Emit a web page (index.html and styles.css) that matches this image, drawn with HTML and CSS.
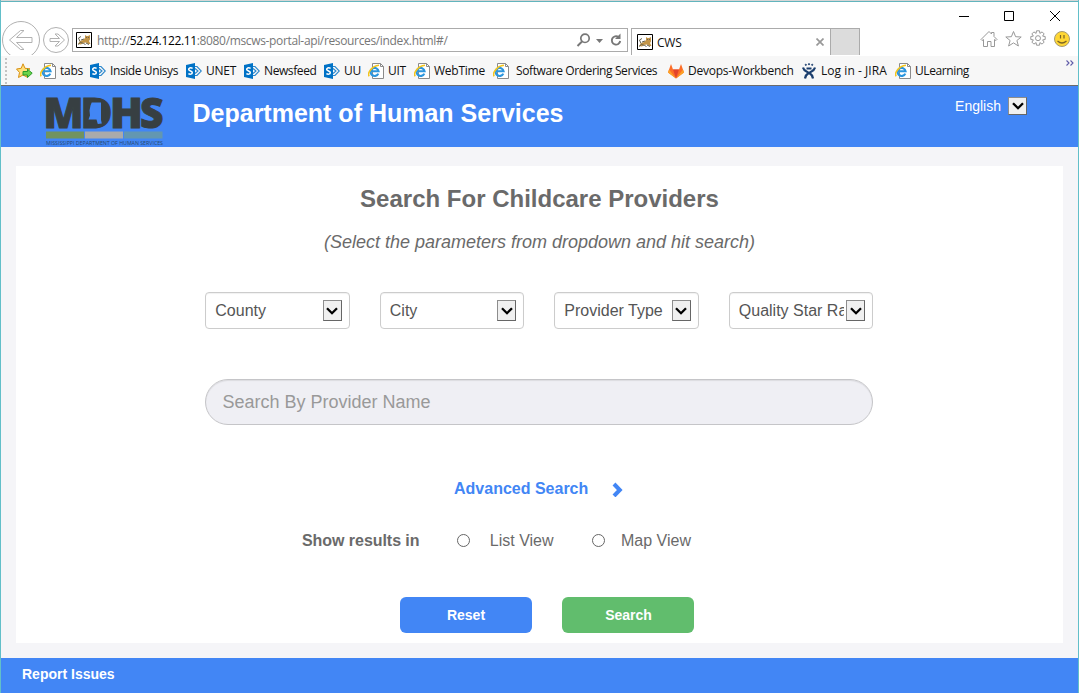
FILE: index.html
```html
<!DOCTYPE html>
<html lang="en">
<head>
<meta charset="utf-8">
<title>CWS</title>
<link rel="stylesheet" href="styles.css">
</head>
<body>
<svg class="defs" width="0" height="0">
  <symbol id="ie" viewBox="0 0 16 16">
    <path d="M4.500.5h8l3 3v12h-11z" fill="#fff" stroke="#8b8b8b"/>
    <path d="M12.5.5v3h3" fill="none" stroke="#8b8b8b"/>
    <path d="M10.300 10.600A4 4 0 1 1 10.600 8.300H3.400" fill="none" stroke="#2c96de" stroke-width="2.100"/>
    <path d="M1.200 13.300C-1 10.500 3.500 3 11 2.300" fill="none" stroke="#f4c51c" stroke-width="1.600"/>
  </symbol>
  <symbol id="sp" viewBox="0 0 16 16">
    <path d="M9 3.500L11 3.500 15.300 8 11 12.500 9 12.500" fill="none" stroke="#2b87cc" stroke-width="1.100"/>
    <path d="M9 5.500l3 2.500L9 10.500" fill="none" stroke="#2b87cc" stroke-width="1.100"/>
    <path d="M0 2l9-2v16l-9-2z" fill="#0072c6"/>
    <path d="M6.600 5.300C4.500 4.200 2.500 5 2.700 6.500 3 8.200 6.400 7.700 6.300 9.600 6.200 11.300 4 11.600 2.400 10.600" fill="none" stroke="#fff" stroke-width="1.500"/>
  </symbol>
  <symbol id="cat" viewBox="0 0 16 16">
    <path d="M.5.500h15v15H.5z" fill="#fff" stroke="#000"/>
    <path d="M2 12l2-3 3-1 2-2V3l1.500 1h1.500L14 3v4.500L13 9l1.500 3h-2l-2.500-1.500-3 .5-2 1.500z" fill="#c39548"/>
    <path d="M4 9.500L2.500 6 5 4.500M2 12.500l2.500-2 3 1 2 1M10 11l3 1.500M5 8l3-1" fill="none" stroke="#66624f"/>
    <path d="M10 5.500h1m1 0h1" stroke="#555" stroke-width=".8"/>
  </symbol>
  <symbol id="down" viewBox="0 0 12 8"><path d="M1 1.200L6 6.200l5-5" fill="none" stroke="#000" stroke-width="2.300"/></symbol>
</svg>
<div class="window">
  <div class="chrome">
    <div class="titlebar">
      <svg width="104" height="12" viewBox="0 0 104 12" fill="none" stroke="#000"><path d="M1 6.500h10M46.500 1.500h9v9h-9zM92 1l10 10M102 1L92 11"/></svg>
    </div>
    <div class="nav">
      <svg class="arrows" width="70" height="34" viewBox="0 0 70 34" fill="none" stroke="#b1b1b1">
        <circle cx="20" cy="19" r="18.500" fill="#fff"/><circle cx="55" cy="19" r="12.500" fill="#fff"/>
        <path d="M8.500 19l11-9.500h3.500l-7.500 7h15.500v5H15.500l7.500 7h-3.500z"/>
        <path d="M63.500 19l-6.500-6h-3l4.500 4.500h-9.500v3h9.500L54 25h3z"/>
      </svg>
      <div class="address">
        <svg width="16" height="16"><use href="#cat"/></svg>
        <span class="url">http://<b>52.24.122.11</b>:8080/mscws-portal-api/resources/index.html#/</span>
        <svg width="46" height="16" viewBox="0 0 46 16" fill="none" stroke="#777">
          <circle cx="9" cy="6.300" r="4.200" stroke-width="1.700"/><path d="M6 9.500L1.500 14" stroke-width="2"/>
          <path d="M20 7h7l-3.500 4z" fill="#777" stroke="none"/>
          <path d="M42.500 5A4.200 4.200 0 1 0 44.200 9" stroke-width="1.900"/><path d="M44.500 1.500v5.500H39z" fill="#777" stroke="none"/>
        </svg>
      </div>
      <div class="tab">
        <svg width="16" height="16"><use href="#cat"/></svg>
        <span>CWS</span>
        <svg width="8" height="8" viewBox="0 0 8 8"><path d="M.5.5l7 7m0-7l-7 7" stroke="#999" stroke-width="1.700"/></svg>
      </div>
      <div class="newtab"></div>
      <div class="tools">
        <svg width="90" height="18" viewBox="0 0 90 18" fill="none" stroke="#999">
          <path d="M1 9.500L9 1.500l2.500 2.500V2.500H14v4l3 3-1 1-1.500-1v7H11v-5H7.500v5h-4v-7l-1.500 1z"/>
          <path d="M33.500 1.500l2.100 5.200 5.600.3-4.300 3.500 1.500 5.500-4.900-3.100-4.900 3.100 1.500-5.500L25.800 7l5.600-.3z"/>
          <path d="M56.500.800h3l.4 2.600 2.200-1.500 2 2-1.500 2.200 2.600.4v3l-2.600.4 1.500 2.200-2 2-2.200-1.500-.4 2.600h-3l-.4-2.600-2.200 1.500-2-2 1.500-2.200-2.600-.4v-3l2.600-.4-1.500-2.200 2-2 2.200 1.500z"/><circle cx="58" cy="8.200" r="2.500"/>
          <circle cx="82" cy="9" r="7.500" fill="#ffd735" stroke="#a59a74"/>
          <path d="M80.500 5v3.500m3.500-3.500v3.500M77.500 11q4.500 4 9 0" stroke="#7c6526" stroke-width="1.200"/>
        </svg>
      </div>
    </div>
  </div>
  <div class="bookmarks">
    <span class="grip"></span>
    <span class="bm"><svg width="17" height="16" viewBox="0 0 17 16"><path d="M7 .8l2 4.500 5 .5-3.600 3.500 1 5L7 12l-4.500 2.500 1-5L.5 6l4.700-.7z" fill="#ffe07a" stroke="#d89013"/><path d="M7 8.500h4.500V6.200l4.700 4-4.700 4.300V12H7z" fill="#6bd34b" stroke="#299b29"/></svg></span>
    <span class="bm"><svg width="16" height="16"><use href="#ie"/></svg><span>tabs</span></span>
    <span class="bm bm-tight"><svg width="16" height="16"><use href="#sp"/></svg><span>Inside Unisys</span></span>
    <span class="bm"><svg width="16" height="16"><use href="#sp"/></svg><span>UNET</span></span>
    <span class="bm bm-tight"><svg width="16" height="16"><use href="#sp"/></svg><span>Newsfeed</span></span>
    <span class="bm"><svg width="16" height="16"><use href="#sp"/></svg><span>UU</span></span>
    <span class="bm"><svg width="16" height="16"><use href="#ie"/></svg><span>UIT</span></span>
    <span class="bm"><svg width="16" height="16"><use href="#ie"/></svg><span>WebTime</span></span>
    <span class="bm bm-wide bm-tight"><svg width="16" height="16"><use href="#ie"/></svg><span>Software Ordering Services</span></span>
    <span class="bm"><svg width="16" height="16" viewBox="0 0 16 16"><path d="M3 1l2 5.500h6L13 1l3 8.500-8 6-8-6z" fill="#fc6d26"/><path d="M5 6.500h6l-3 9z" fill="#e24329"/><path d="M0 9.500l1-3 7 9zM16 9.500l-1-3-7 9z" fill="#fca326"/></svg><span>Devops-Workbench</span></span>
    <span class="bm bm-jira"><svg width="14" height="16" viewBox="0 0 14 16" fill="none" stroke="#1c3f6e"><path d="M1 4.500Q2 7.500 4.500 8.500T7 11.500Q7 9.500 9.500 8.500T13 4.500M6.500 10Q3.500 12 3 15.500M7.500 10Q10.500 12 11 15.500" stroke-width="2.200"/><circle cx="3.800" cy="1.800" r=".6" fill="#1c3f6e"/><circle cx="7" cy="1.200" r=".6" fill="#1c3f6e"/><circle cx="10.200" cy="1.800" r=".6" fill="#1c3f6e"/><path d="M4.500 5.500h5" stroke-width="2"/></svg><span>Log in - JIRA</span></span>
    <span class="bm bm-tight"><svg width="16" height="16"><use href="#ie"/></svg><span>ULearning</span></span>
    <svg class="more" width="8" height="6" viewBox="0 0 8 6" fill="none" stroke="#5f5ba8" stroke-width="1.100"><path d="M.5.500L3 3 .5 5.500M4.500.500L7 3 4.500 5.500"/></svg>
  </div>
  <header class="header">
    <svg class="logo" width="118" height="50" viewBox="0 0 118 50">
      <g class="logo-name">
        <text x="-2.500" y="30.600" textLength="40" lengthAdjust="spacingAndGlyphs">M</text>
        <text x="34.500" y="30.600" textLength="32" lengthAdjust="spacingAndGlyphs">D</text>
        <text x="64" y="30.600" textLength="33" lengthAdjust="spacingAndGlyphs">H</text>
        <text x="94" y="30.600" textLength="23.500" lengthAdjust="spacingAndGlyphs">S</text>
      </g>
      <path d="M40 3h11q9 2 9 12.500T51 28H40z" fill="#373f42"/>
      <path d="M45.700 5.500h9.300v17.500l.8 3.500-4 .5-1.300-4.500H42.500l1.500-4-.5-5 1-5z" fill="#4286f5"/>
      <path d="M0 34.500h38v7H0z" fill="#71935f"/><path d="M39 34.500h38v7H39z" fill="#a9aaab"/><path d="M78 34.500h38.500v7H78z" fill="#6397b1"/>
      <text class="logo-caption" x="0" y="48" textLength="117" lengthAdjust="spacingAndGlyphs">MISSISSIPPI DEPARTMENT OF HUMAN SERVICES</text>
    </svg>
    <h1 class="site-title">Department of Human Services</h1>
    <div class="language"><span>English</span><i class="arrow"><svg width="12" height="8"><use href="#down"/></svg></i></div>
  </header>
  <main class="page">
    <section class="card">
      <h2 class="heading">Search For Childcare Providers</h2>
      <p class="hint">(Select the parameters from dropdown and hit search)</p>
      <div class="filters">
        <div class="select"><span>County</span><i class="arrow"><svg width="12" height="8"><use href="#down"/></svg></i></div>
        <div class="select"><span>City</span><i class="arrow"><svg width="12" height="8"><use href="#down"/></svg></i></div>
        <div class="select"><span>Provider Type</span><i class="arrow"><svg width="12" height="8"><use href="#down"/></svg></i></div>
        <div class="select"><span>Quality Star Rating</span><i class="arrow"><svg width="12" height="8"><use href="#down"/></svg></i></div>
      </div>
      <input class="provider" type="text" placeholder="Search By Provider Name">
      <div class="advanced"><span>Advanced Search</span><svg width="12" height="15" viewBox="0 0 12 15"><path d="M2 2L7.800 8 2 14" fill="none" stroke="#4286f5" stroke-width="4"/></svg></div>
      <div class="results">
        <b>Show results in</b>
        <label class="option"><i class="radio"></i><span>List View</span></label>
        <label class="option option-map"><i class="radio"></i><span>Map View</span></label>
      </div>
      <div class="buttons"><button class="btn">Reset</button><button class="btn btn-search">Search</button></div>
    </section>
  </main>
  <footer class="footer">Report Issues</footer>
</div>
</body>
</html>
```
FILE: styles.css
```css
* { box-sizing: border-box; }
body { margin: 0; font-family: "Liberation Sans", Arial, sans-serif; color: #6a6a6a; }
svg { display: block; flex: none; }
.defs { display: none; }
.window { width: 1079px; height: 693px; overflow: hidden; display: flex; flex-direction: column; border: 1px solid #62bfc9; border-top: 0; border-bottom: 0; }
.chrome { height: 56px; flex: none; border-top: 1px solid #d6d6d6; box-shadow: inset 0 1px #62b4bd; background: #fff; font-family: "Open Sans", "Noto Sans", sans-serif; }
.titlebar { height: 20px; display: flex; justify-content: flex-end; padding: 9px 16px 0 0; }
.nav { display: flex; align-items: flex-start; }
.arrows { margin-right: 1px; }
.address { width: 556px; height: 24px; margin-top: 7px; border: 1px solid #ababab; display: flex; align-items: center; padding: 0 5px 0 3px; }
.url { flex: 1; margin-left: 5px; font-size: 12px; letter-spacing: -0.35px; color: #777; white-space: nowrap; }
.url b { font-weight: 400; color: #000; }
.tab { width: 200px; height: 27px; margin: 7px 0 0 3px; border: 1px solid #ababab; border-bottom: 0; display: flex; align-items: center; padding: 0 6px 0 5px; font-size: 12px; letter-spacing: -0.2px; color: #111; }
.tab span { flex: 1; margin-left: 4px; }
.newtab { width: 29px; height: 27px; margin-top: 7px; background: #dcdcdc; border: 1px solid #ababab; border-left: 0; border-bottom: 0; }
.tools { margin: 9px 0 0 120px; }
.bookmarks { height: 30px; flex: none; background: #f7f7f7; border-bottom: 1px solid #6b6b6b; display: grid; grid-template-columns: 15px 24px 50px 96px 58px 80px 44px 46px 79px 175px 134px 93px 160px 1fr; align-items: center; font: 12px "Open Sans", "Noto Sans", sans-serif; letter-spacing: -0.25px; color: #111; white-space: nowrap; }
.grip { width: 0; height: 26px; margin-left: 4px; border-left: 2px dotted #c3c3c3; }
.bm { display: flex; align-items: center; gap: 4px; }
.bm-tight { letter-spacing: -0.4px; }
.bm-wide { gap: 7px; }
.bm-jira { gap: 5px; letter-spacing: 0.05px; }
.more { align-self: start; margin: 4px 0 0 11px; }
.header { height: 61px; flex: none; background: #4286f5; display: flex; align-items: flex-start; padding: 11px 51px 0 44.500px; color: #fff; }
.logo { overflow: visible; }
.logo-name { font: 800 43px "Open Sans", sans-serif; fill: #373f42; stroke: #373f42; stroke-width: 1px; }
.logo-caption { font: 6px "Open Sans", sans-serif; fill: #26466f; }
.site-title { margin: 1px 0 0 29px; font-size: 25px; line-height: 30px; flex: 1; }
.language { display: flex; align-items: center; gap: 7px; font-size: 14px; }
.arrow { width: 19px; height: 21px; flex: none; display: grid; place-items: center; background: #f0f0f0; border: 1px solid #8d8d8d; border-right-color: #666; border-bottom-color: #666; }
.language .arrow { height: 18px; }
.page { height: 511px; flex: none; background: #f5f5f8; padding: 19px 15px 15px; }
.card { height: 477px; background: #fff; padding: 17px 0 0 189px; }
.heading { width: 669px; margin: 0; text-align: center; font-size: 24px; line-height: 32px; }
.hint { width: 669px; margin: 14px 0 0; text-align: center; font-size: 18px; line-height: 26px; font-style: italic; }
.filters { width: 668px; margin-top: 37px; display: grid; grid-template-columns: repeat(4, 1fr); gap: 30px; }
.select { min-width: 0; height: 37px; display: flex; align-items: center; border: 1px solid #ccc; border-radius: 4px; box-shadow: inset 0 1px 1px rgba(0,0,0,.06); padding: 0 7px 0 9.300px; font-size: 16px; color: #555; }
.select span { flex: 1; min-width: 0; overflow: hidden; white-space: nowrap; margin-right: 2px; }
.provider { display: block; width: 668px; height: 46px; margin: 50px 0 0; border: 1px solid #c5c5c8; border-radius: 23px; background: #efeff4; box-shadow: inset 0 1px 1px rgba(0,0,0,.08); padding: 0 16.500px; font: 18px "Liberation Sans", Arial, sans-serif; }
.provider::placeholder { color: #999; opacity: 1; }
.advanced { display: flex; align-items: center; gap: 24px; margin: 54px 0 0 249px; height: 20px; font-size: 16px; font-weight: 700; color: #4286f5; }
.results { display: flex; align-items: center; height: 20px; margin: 32px 0 0 97px; font-size: 16px; }
.results b { letter-spacing: -0.05px; }
.option { display: flex; align-items: center; gap: 20px; margin-left: 37.300px; }
.option-map { gap: 16px; margin-left: 38.500px; }
.radio { width: 13px; height: 13px; margin-bottom: 2px; border: 1px solid #666; border-radius: 50%; }
.buttons { display: flex; gap: 30px; margin: 46px 0 0 195px; }
.btn { width: 132px; height: 36px; padding: 0; border: 0; border-radius: 6px; background: #4286f5; color: #fff; font: 700 14px "Liberation Sans", Arial, sans-serif; }
.btn-search { background: #61bd6d; padding-left: 1px; }
.footer { height: 35px; flex: none; background: #4286f5; color: #fff; font-size: 14px; font-weight: 700; line-height: 32px; padding-left: 21px; }
```
